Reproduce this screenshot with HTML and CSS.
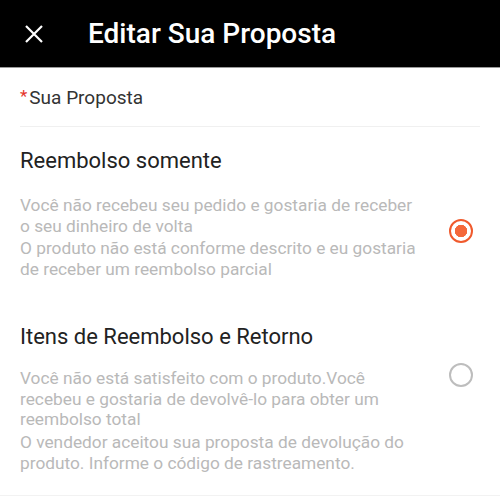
FILE: index.html
```html
<!DOCTYPE html>
<html>
    <head>
        <meta charset="utf-8">
        <title>Editar Sua Proposta</title>
        <link rel="stylesheet" href="styles.css">
    </head>
    <body>
        <div id="header">
            <svg class="close" width="18" height="18" viewBox="0 0 18 18">
                <path d="M1 1 L17 17 M17 1 L1 17" stroke="#fff" stroke-width="2.2" fill="none"/>
            </svg>
            <h1>Editar Sua Proposta</h1>
        </div>
        <div id="card">
            <div class="field"><span class="req">*</span>Sua Proposta</div>

            <div class="option">
                <h2>Reembolso somente</h2>
                <div class="row">
                    <div class="descr">
                        <p>Você não recebeu seu pedido e gostaria de receber o seu dinheiro de volta</p>
                        <p>O produto não está conforme descrito e eu gostaria de receber um reembolso parcial</p>
                    </div>
                    <span class="radio checked"></span>
                </div>
            </div>

            <div class="option second">
                <h2>Itens de Reembolso e Retorno</h2>
                <div class="row">
                    <div class="descr">
                        <p>Você não está satisfeito com o produto.Você recebeu e gostaria de devolvê-lo para obter um reembolso total</p>
                        <p>O vendedor aceitou sua proposta de devolução do produto. Informe o código de rastreamento.</p>
                    </div>
                    <span class="radio top"></span>
                </div>
            </div>
        </div>
    </body>
</html>
```

FILE: styles.css
```css
body {
    margin: 0;
    font-family: Roboto, "Noto Sans", Arial, sans-serif;
    background-color: #f2f2f2;
}

#header {
    display: flex;
    align-items: center;
    height: 67px;
    background-color: #000;
    border-bottom: 1px solid #9a9a9a;
    padding-left: 25px;
}
.close {
    flex: 0 0 18px;
}
h1 {
    margin: 0 0 0 45px;
    color: white;
    font-size: 28px;
    font-weight: 500;
}

#card {
    background-color: white;
    padding-bottom: 20px;
}

.field {
    margin: 0 20px;
    height: 58px;
    line-height: 60px;
    border-bottom: 1px solid #f0f0f0;
    font-size: 19px;
    color: #333;
}
.req {
    display: inline-block;
    vertical-align: top;
    line-height: 56px;
    font-size: 17px;
    color: #e5342c;
    margin-right: 2px;
}

.option {
    padding: 20px 20px 0 20px;
}
.option.second {
    padding-top: 41px;
}
h2 {
    margin: 0;
    font-size: 22px;
    font-weight: 400;
    color: #222;
    line-height: 28px;
}
.row {
    display: flex;
    align-items: center;
    margin-top: 20px;
}
.second .row {
    margin-top: 17px;
}
.descr {
    flex: 1;
    padding-right: 24px;
}
.descr p {
    margin: 0 0 2px 0;
    font-size: 17.3px;
    line-height: 20.7px;
    color: #b9b9b9;
}
.radio {
    flex: 0 0 24px;
    box-sizing: border-box;
    width: 24px;
    height: 24px;
    margin-right: 7px;
    border: 2px solid #bdbdbd;
    border-radius: 50%;
}
.radio.top {
    align-self: flex-start;
    margin-top: -5px;
}
.radio.checked {
    margin-bottom: 14px;
    border: 2.5px solid #f05a2d;
    background: radial-gradient(circle, #f4683a 0 6px, white 6.5px);
}
```
